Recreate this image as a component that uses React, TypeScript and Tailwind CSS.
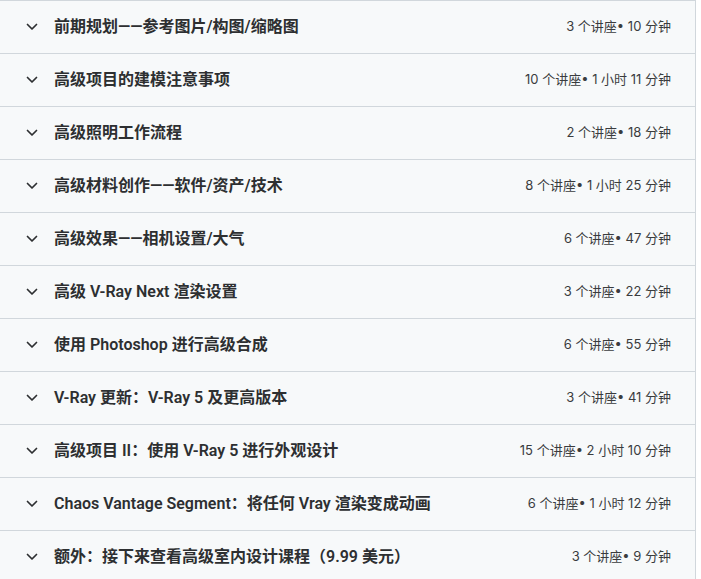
import { useState } from 'react';

const sections = [
  { title: '前期规划——参考图片/构图/缩略图', meta: '3 个讲座• 10 分钟' },
  { title: '高级项目的建模注意事项', meta: '10 个讲座• 1 小时 11 分钟' },
  { title: '高级照明工作流程', meta: '2 个讲座• 18 分钟' },
  { title: '高级材料创作——软件/资产/技术', meta: '8 个讲座• 1 小时 25 分钟' },
  { title: '高级效果——相机设置/大气', meta: '6 个讲座• 47 分钟' },
  { title: '高级 V-Ray Next 渲染设置', meta: '3 个讲座• 22 分钟' },
  { title: '使用 Photoshop 进行高级合成', meta: '6 个讲座• 55 分钟' },
  { title: 'V-Ray 更新：V-Ray 5 及更高版本', meta: '3 个讲座• 41 分钟' },
  { title: '高级项目 II：使用 V-Ray 5 进行外观设计', meta: '15 个讲座• 2 小时 10 分钟' },
  { title: 'Chaos Vantage Segment：将任何 Vray 渲染变成动画', meta: '6 个讲座• 1 小时 12 分钟' },
  { title: '额外：接下来查看高级室内设计课程（9.99 美元）', meta: '3 个讲座• 9 分钟' },
];

function Chevron() {
  return (
    <svg className="w-[12px] h-[8px] shrink-0" viewBox="0 0 12 8" fill="none" stroke="currentColor">
      <path d="M1.5 1.5L6 6l4.5-4.5" strokeWidth={1.7} strokeLinecap="round" strokeLinejoin="round" />
    </svg>
  );
}

export default function App() {
  const [open, setOpen] = useState<number | null>(null);

  return (
    <div className="min-h-screen bg-white text-[#2d2f31]">
      <div className="w-[696px] border-t border-r border-[#d1d7dc] bg-[#f7f9fa]">
        {sections.map((s, i) => (
          <button
            key={s.title}
            onClick={() => setOpen(open === i ? null : i)}
            className="flex h-[53px] w-full items-center border-b border-[#d1d7dc] pl-[26px] pr-[24px] text-left"
          >
            <Chevron />
            <span className="ml-[16px] flex-1 text-[16px] font-semibold font-['Roboto','Noto_Sans_CJK_SC',sans-serif]">
              {s.title}
            </span>
            <span className="text-[13px] font-['Inter','Noto_Sans_CJK_SC',sans-serif] text-[#3a3c3e]">{s.meta}</span>
          </button>
        ))}
      </div>
    </div>
  );
}
